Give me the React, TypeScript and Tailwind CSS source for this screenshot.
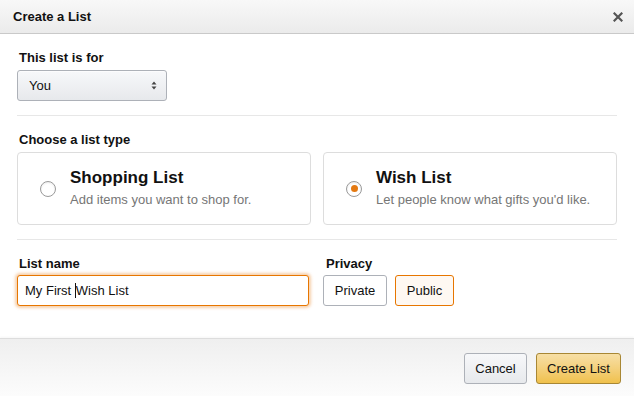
import React from 'react'

function Radio({ checked }: { checked?: boolean }) {
  return (
    <span className="flex h-[16px] w-[16px] shrink-0 items-center justify-center rounded-full border border-[#9a9a9a] bg-white shadow-[inset_0_1px_2px_rgba(0,0,0,0.08)]">
      {checked && <span className="h-[7px] w-[7px] rounded-full bg-[#e47911]" />}
    </span>
  )
}

function ListTypeCard({ title, desc, checked }: { title: string; desc: string; checked?: boolean }) {
  return (
    <div className="flex h-[73px] items-center rounded-[4px] border border-[#dddddd] bg-white pl-[22px]">
      <Radio checked={checked} />
      <div className="ml-[14px] flex flex-col pb-[2px]">
        <span className="text-[17px] font-bold leading-[22px] text-[#111]">{title}</span>
        <span className="mt-[2px] text-[13px] leading-[18px] text-[#767676]">{desc}</span>
      </div>
    </div>
  )
}

export default function App() {
  return (
    <div className="flex h-[396px] w-[634px] flex-col bg-white font-['Liberation_Sans',Arial,sans-serif] text-[#111]">
      {/* Header */}
      <div className="flex h-[34px] shrink-0 items-center justify-between border-b border-[#c9c9c9] bg-gradient-to-b from-[#f8f8f8] to-[#ebebeb] pl-[13px] pr-[11px]">
        <span className="text-[13px] font-bold text-[#111]">Create a List</span>
        <svg width="10" height="10" viewBox="0 0 10 10" className="mt-[1px]">
          <path d="M1.5 1.5 L8.5 8.5 M8.5 1.5 L1.5 8.5" stroke="#555" strokeWidth="2.2" strokeLinecap="square" />
        </svg>
      </div>

      {/* Body */}
      <div className="flex flex-1 flex-col px-[17px] pt-[16px]">
        <label className="pl-[2px] text-[13px] font-bold leading-[16px]">This list is for</label>
        <div className="mt-[4px] flex h-[31px] w-[150px] items-center justify-between rounded-[3px] border border-[#adb1b8] bg-gradient-to-b from-[#f7f8fa] to-[#e7e9ec] pl-[11px] pr-[9px] shadow-[0_1px_0_rgba(255,255,255,0.6)_inset]">
          <span className="text-[13px]">You</span>
          <svg width="6" height="9" viewBox="0 0 6 9">
            <path d="M3 0.5 L5.5 3.5 L0.5 3.5 Z M3 8.5 L5.5 5.5 L0.5 5.5 Z" fill="#444" />
          </svg>
        </div>

        <div className="mt-[14px] border-t border-[#e7e7e7]" />

        <label className="mt-[16px] pl-[2px] text-[13px] font-bold leading-[16px]">Choose a list type</label>
        <div className="mt-[4px] grid grid-cols-2 gap-[12px]">
          <ListTypeCard title="Shopping List" desc="Add items you want to shop for." />
          <ListTypeCard title="Wish List" desc="Let people know what gifts you'd like." checked />
        </div>

        <div className="mt-[14px] border-t border-[#e7e7e7]" />

        <div className="mt-[16px] flex gap-[14px]">
          <div className="flex w-[292px] flex-col">
            <label className="pl-[2px] text-[13px] font-bold leading-[16px]">List name</label>
            <div className="mt-[3px] flex h-[31px] items-center whitespace-pre rounded-[3px] border border-[#e77600] bg-white px-[7px] text-[13px] shadow-[0_0_3px_2px_rgba(228,121,17,0.35)]">
              <span>My First </span>
              <span className="inline-block h-[15px] w-px bg-[#111]" />
              <span>Wish List</span>
            </div>
          </div>
          <div className="flex flex-col">
            <label className="pl-[3px] text-[13px] font-bold leading-[16px]">Privacy</label>
            <div className="mt-[3px] flex gap-[8px]">
              <button className="h-[31px] w-[64px] rounded-[3px] border border-[#adb1b8] bg-white text-[13px] text-[#111]">
                Private
              </button>
              <button className="h-[31px] w-[59px] rounded-[3px] border border-[#e77600] bg-[#fef8f2] text-[13px] text-[#111]">
                Public
              </button>
            </div>
          </div>
        </div>
      </div>

      {/* Footer */}
      <div className="flex h-[58px] shrink-0 items-start justify-end gap-[9px] border-t border-[#dddddd] bg-gradient-to-b from-[#efefef] to-[#fcfcfc] pr-[13px] pt-[14px] shadow-[0_-1px_2px_rgba(0,0,0,0.04)]">
        <button className="h-[31px] w-[63px] rounded-[3px] border border-[#adb1b8] bg-gradient-to-b from-[#f7f8fa] to-[#e7e9ec] text-[13px] text-[#111]">
          Cancel
        </button>
        <button className="h-[31px] w-[85px] rounded-[3px] border border-[#a88734] bg-gradient-to-b from-[#f7dfa5] to-[#f0c14b] text-[13px] text-[#111]">
          Create List
        </button>
      </div>
    </div>
  )
}
